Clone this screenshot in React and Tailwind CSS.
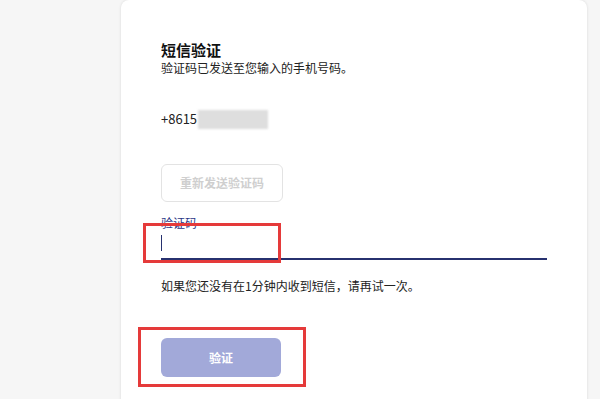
export default function App() {
  const font = { fontFamily: '"Microsoft YaHei", "Noto Sans CJK SC", "Noto Sans", sans-serif' };

  return (
    <div className="relative h-[399px] w-[600px] overflow-hidden bg-[#f6f6f6]" style={font}>
      <main className="ml-[121px] h-[420px] w-[466px] rounded-t-lg bg-white px-10 pt-10 shadow-[0_0_3px_rgba(0,0,0,0.12)]">
        <h1 className="text-[15px] font-bold leading-[20px] text-[#111]">短信验证</h1>
        <p className="text-[12px] leading-[16px] text-[#222]">验证码已发送至您输入的手机号码。</p>

        <div className="mt-[33px] flex items-center text-[13px] leading-[20px] text-[#222]">
          <span>+8615</span>
          <span className="ml-[1px] inline-block h-[19px] w-[70px] bg-[#dedede] blur-[1px]" />
        </div>

        <button
          type="button"
          disabled
          className="mt-[35px] flex h-[38px] w-[122px] items-center justify-center rounded-md border border-[#e3e3e3] bg-white text-[12px] font-bold text-[#cfcfcf]"
        >
          重新发送验证码
        </button>

        <label className="mt-[13px] block text-[12px] leading-[16px] text-[#2a3585]">验证码</label>
        <div className="flex h-[29px] items-center border-b-2 border-[#27316f]">
          <span className="mt-[-3px] block h-[16px] w-[1px] bg-[#27316f]" />
        </div>

        <p className="mt-[18px] text-[12px] leading-[16px] text-[#222]">
          如果您还没有在1分钟内收到短信，请再试一次。
        </p>

        <button
          type="button"
          className="mt-[44px] flex h-[39px] w-[120px] items-center justify-center rounded-md bg-[#a2a9d9] text-[12px] font-bold text-white"
        >
          验证
        </button>
      </main>

      {/* annotation boxes */}
      <div className="absolute left-[143px] top-[223px] h-[40px] w-[138px] border-[3px] border-[#e53a3a]" />
      <div className="absolute left-[138px] top-[327px] h-[60px] w-[168px] border-[3px] border-[#e53a3a]" />
    </div>
  );
}
